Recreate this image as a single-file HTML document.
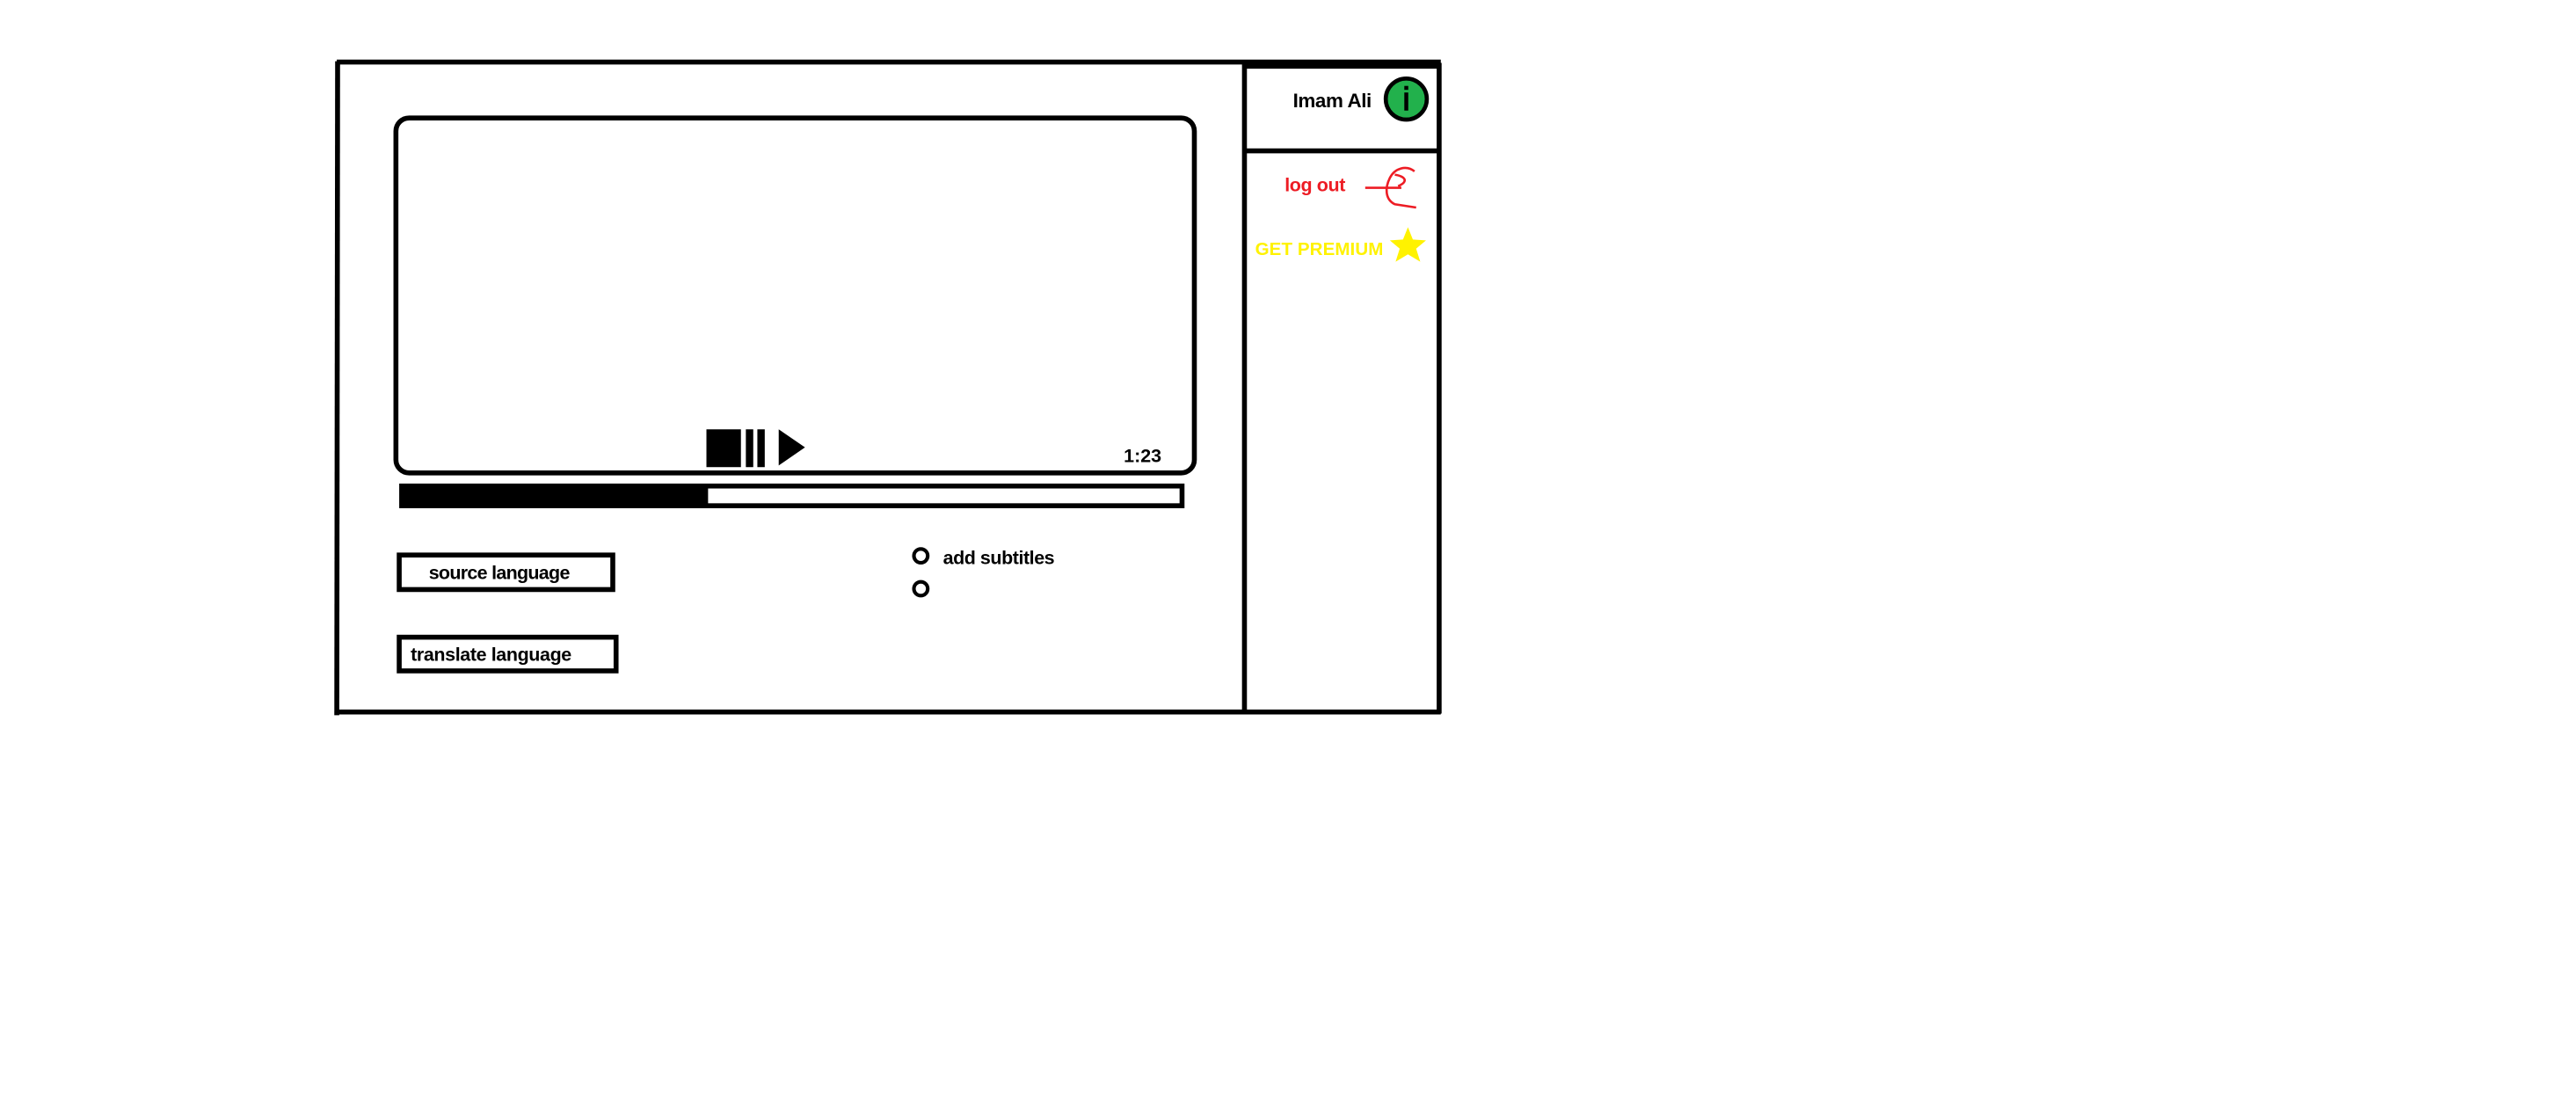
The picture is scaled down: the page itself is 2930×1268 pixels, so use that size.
<!DOCTYPE html>
<html><head><meta charset="utf-8"><style>
html,body{margin:0;padding:0;background:#fff;width:2930px;height:1268px;overflow:hidden}
svg{display:block}
text{font-family:"Liberation Sans",sans-serif;font-weight:bold}
</style></head><body>
<svg width="2930" height="1268" viewBox="0 0 1568 678" xmlns="http://www.w3.org/2000/svg">
<rect width="1568" height="678" fill="#fff"/>
<g fill="none" stroke="#000" stroke-width="3">
<line x1="205" y1="37.5" x2="877" y2="37.5"/>
<line x1="205.5" y1="37" x2="205" y2="435"/>
<line x1="204" y1="433" x2="877" y2="433"/>
<line x1="757.5" y1="38" x2="757.5" y2="434"/>
<line x1="876" y1="38" x2="876" y2="434"/>
<line x1="757" y1="40" x2="877" y2="40"/>
<line x1="757" y1="91.5" x2="877" y2="91.5"/>
<rect x="241" y="71.5" width="486" height="216" rx="8"/>
<rect x="244.5" y="295.5" width="475" height="12"/>
<rect x="243" y="337.5" width="130" height="21"/>
<rect x="243" y="387.5" width="132" height="20.5"/>
<circle cx="560.5" cy="338" r="4.2" stroke-width="2.2"/>
<circle cx="560.5" cy="358" r="4.2" stroke-width="2.2"/>
</g>
<rect x="244" y="295" width="187" height="13" fill="#000"/>
<rect x="430" y="261" width="21" height="23" fill="#000"/>
<rect x="454" y="261" width="4.5" height="23" fill="#000"/>
<rect x="461" y="261" width="4.5" height="23" fill="#000"/>
<path d="M474 261 L490 272 L474 283 Z" fill="#000"/>
<text x="684" y="281" font-size="11.5">1:23</text>
<text x="261" y="352" font-size="11.5" textLength="86">source language</text>
<text x="250" y="402" font-size="11.5" textLength="98">translate language</text>
<text x="574" y="343" font-size="11.5" textLength="68">add subtitles</text>
<text x="787" y="65" font-size="12" textLength="48">Imam Ali</text>
<circle cx="856" cy="60" r="12.5" fill="#22b14c" stroke="#000" stroke-width="2.5"/>
<rect x="854.8" y="52" width="2.4" height="2.4" fill="#000"/>
<rect x="854.8" y="56" width="2.4" height="11" fill="#000"/>
<text x="782" y="116" font-size="11.5" fill="#ed1c24" textLength="37">log out</text>
<path d="M831 114 L853 114 M861 104 C856 100 849 102 846 108 C843 114 843 121 849 124 L862 126 M849 106 C855 107 858 110 851 113" fill="none" stroke="#ed1c24" stroke-width="1.4"/>
<text x="764" y="155" font-size="11" fill="#fff200" textLength="78">GET PREMIUM</text>
<path d="M857 138 L860 145.5 L868 146 L862 151 L864.5 159 L857 154.5 L849.5 159 L852 151 L846 146 L854 145.5 Z" fill="#fff200"/>
</svg>
</body></html>
